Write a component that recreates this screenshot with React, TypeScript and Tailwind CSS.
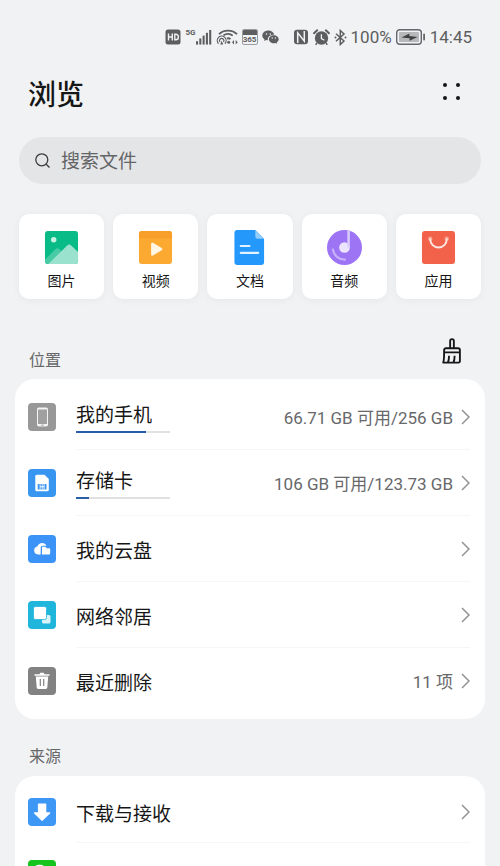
import type { ReactNode } from 'react'

type Row = {
    name: string
    icon: ReactNode
    detail?: string
    used?: number
}

/* ---------- status bar icons ---------- */

function StatusIcons() {
    return (
        <>
            <svg width="16" height="16" viewBox="0 0 16 16" aria-hidden="true">
                <rect x="0.500" y="0.500" width="15" height="15" rx="2.500" fill="currentColor" />
                <path d="M3.500 4.500v7M7.300 4.500v7M3.500 8h3.800M9.800 5.200v5.600h1a2.600 2.800 0 0 0 0-5.600z" fill="none" stroke="#f1f2f4" strokeWidth="1.400" />
            </svg>
            <div className="flex items-start">
                <span className="text-[8px] leading-[8px] font-bold">5G</span>
                <svg width="16" height="17" viewBox="0 0 17 17" fill="currentColor" aria-hidden="true">
                    <rect x="0" y="12.500" width="2.200" height="3.500" />
                    <rect x="3.500" y="9.500" width="2.200" height="6.500" />
                    <rect x="7" y="6.500" width="2.200" height="9.500" />
                    <rect x="10.500" y="3.500" width="2.200" height="12.500" />
                    <rect x="14" y="0.500" width="2.200" height="15.500" />
                </svg>
            </div>
            <svg width="22" height="16" viewBox="0 0 22 16" fill="none" stroke="currentColor" strokeWidth="1.800" aria-hidden="true">
                <path d="M3 5.200C7.500 0.300 16.500 0.300 21 5.200M7.500 6.400c2.600-2 6.600-2 9.200 0.300M11 9.600c1.300-0.600 2.500-0.300 3.500 0.500" />
                <path d="M2.500 14.600a4.400 4.400 0 1 1 6.400 0M3.900 12.900a2.200 2.200 0 1 1 3.600 0" strokeWidth="1.200" />
                <path d="M4.200 15.500L5.700 11.800L7.200 15.500z" fill="currentColor" stroke="none" />
                <circle cx="12.700" cy="13.200" r="1.500" fill="currentColor" stroke="none" />
                <path d="M16 13.200l2-2.200v4.400zM21.700 13.200l-2-2.200v4.400z" fill="currentColor" stroke="none" />
            </svg>
            <div className="flex h-4 w-4 flex-col overflow-hidden rounded-[2px] border border-[#9b9c9e]">
                <span className="h-[5px] shrink-0 bg-[#5d5e60]" />
                <span className="flex justify-center text-[8px] leading-[10px] font-bold">365</span>
            </div>
            <svg width="17" height="16" viewBox="0 0 17 16" fill="currentColor" aria-hidden="true">
                <path d="M6.400 1.500C2.900 1.500.3 3.700.3 6.500c0 1.600.8 2.900 2.200 3.800l-.5 1.700 2-1c.6.200 1.200.3 1.900.3C5.200 8 8 5.500 12.200 5.700 11.700 3.200 9.300 1.500 6.400 1.500z" />
                <path d="M16.700 10.200c0-2.200-2.200-4-4.900-4s-4.900 1.800-4.900 4 2.200 4 4.900 4c.6 0 1.200-.1 1.700-.3l1.700.9-.5-1.500c1.200-.7 2-1.800 2-3.100z" />
                <g fill="#f1f2f4">
                    <circle cx="4.500" cy="5" r="0.800" />
                    <circle cx="8.300" cy="5" r="0.800" />
                    <circle cx="10.200" cy="9" r="0.700" />
                    <circle cx="13.400" cy="9" r="0.700" />
                </g>
            </svg>
        </>
    )
}

function DeviceIcons() {
    return (
        <>
            <svg width="16" height="16" viewBox="0 0 16 16" aria-hidden="true">
                <rect x="1" y="0.700" width="14" height="14.600" rx="3" fill="currentColor" />
                <path d="M4.700 14V3.800l6.600 8.400V2" fill="none" stroke="#f1f2f4" strokeWidth="1.500" />
            </svg>
            <svg width="17" height="17" viewBox="0 0 17 17" fill="none" stroke="currentColor" aria-hidden="true">
                <circle cx="8.500" cy="9" r="6.700" fill="currentColor" stroke="none" />
                <path d="M1 4.200L4.200 1.300M16 4.200L12.800 1.300" strokeWidth="2" strokeLinecap="round" />
                <path d="M4 14l-1.300 1.700M13 14l1.300 1.700" strokeWidth="1.500" />
                <path d="M8.400 5.200v4.300l3 1.700" stroke="#f1f2f4" strokeWidth="1.300" />
            </svg>
            <svg width="13" height="17" viewBox="0 0 13 17" fill="none" stroke="currentColor" strokeWidth="1.500" aria-hidden="true">
                <path d="M2 4.700l8 7.300-3.700 3.500v-14L10 5l-8 7.300" />
                <circle cx="1.500" cy="8.500" r="1" fill="currentColor" stroke="none" />
                <circle cx="11.500" cy="8.500" r="1" fill="currentColor" stroke="none" />
            </svg>
        </>
    )
}

function BatteryIcon() {
    return (
        <svg width="30" height="16" viewBox="0 0 30 16" aria-hidden="true">
            <rect x="0.700" y="0.700" width="24.600" height="14.600" rx="3" fill="none" stroke="#66676a" strokeWidth="1.400" />
            <rect x="3" y="3" width="20" height="10" rx="1" fill="#b7b8ba" />
            <path d="M5.500 8.400l8-4-.3 2.500 8.300 1-8 3.900.2-2.600z" fill="#3f4042" />
            <rect x="27.200" y="4.500" width="1.800" height="7" rx="0.900" fill="#66676a" />
        </svg>
    )
}

/* ---------- category icons ---------- */

const categories = [
    {
        name: '图片',
        icon: (
            <>
                <rect x="1" y="1" width="34" height="34" rx="3" fill="#09bb86" />
                <circle cx="10" cy="10" r="2.800" fill="#c9f2e4" />
                <path d="M1 30.500l10.700-10.700a3 3 0 0 1 4.200 0L30 35H4a3 3 0 0 1-3-3z" fill="#46cba4" />
                <path d="M5 34.500l18.800-18.600a3 3 0 0 1 4.200 0l7 6.600V32a3 3 0 0 1-3 3H5z" fill="#9ae2cd" />
            </>
        ),
    },
    {
        name: '视频',
        icon: (
            <>
                <rect x="1" y="1" width="34" height="34" rx="3" fill="#fba931" />
                <path d="M1 8.500V4a3 3 0 0 1 3-3h28a3 3 0 0 1 3 3v4.500z" fill="#f79e2b" />
                <path d="M13.500 14.300c0-1 1-1.600 1.900-1.100l9 5.300c.9.500.9 1.700 0 2.200l-9 5.500c-.9.500-1.900-.1-1.900-1.100z" fill="#fff6e5" />
            </>
        ),
    },
    {
        name: '文档',
        icon: (
            <>
                <path d="M5.500 0H24l9 9v24a3 3 0 0 1-3 3H5.500a3 3 0 0 1-3-3V3a3 3 0 0 1 3-3z" fill="#2598fb" />
                <path d="M24 0l9 9h-7a2 2 0 0 1-2-2z" fill="#93cdfd" />
                <path d="M9 16.500h9M9 23.500h18" stroke="#e4f3ff" strokeWidth="2.200" strokeLinecap="round" />
            </>
        ),
    },
    {
        name: '音频',
        icon: (
            <>
                <circle cx="18" cy="18" r="18" fill="#9d75f4" />
                <circle cx="18" cy="18" r="5.500" fill="#ece4ff" />
                <path d="M22.200 0.500v17.500" stroke="#d9caff" strokeWidth="2.600" />
                <path d="M6 20a12.500 12.500 0 0 0 12.500 10.500" fill="none" stroke="#c8b1fc" strokeWidth="2.200" strokeLinecap="round" />
            </>
        ),
    },
    {
        name: '应用',
        icon: (
            <>
                <rect x="1" y="1" width="34" height="34" rx="3" fill="#f2624b" />
                <circle cx="9.500" cy="9" r="2.300" fill="#f9a08f" />
                <circle cx="26.500" cy="9" r="2.300" fill="#f9a08f" />
                <path d="M9.500 9.500a8.500 8.500 0 0 0 17 0" fill="none" stroke="#ffe8e3" strokeWidth="1.900" strokeLinecap="round" />
            </>
        ),
    },
]

/* ---------- list icons ---------- */

const places: Row[] = [
    {
        name: '我的手机',
        detail: '66.71 GB 可用/256 GB',
        used: 74,
        icon: (
            <>
                <rect width="28" height="28" rx="4" fill="#989898" />
                <rect x="9" y="4.500" width="11" height="19" rx="1.800" fill="#f4f4f4" />
                <rect x="10" y="6.500" width="9" height="14.500" fill="#a0a0a0" />
                <rect x="13.200" y="21.700" width="2.600" height="0.900" fill="#989898" />
            </>
        ),
    },
    {
        name: '存储卡',
        detail: '106 GB 可用/123.73 GB',
        used: 14,
        icon: (
            <>
                <rect width="28" height="28" rx="4" fill="#3896f1" />
                <path d="M8.800 5.700h7.700l4.300 4.300v10.800a1.500 1.500 0 0 1-1.500 1.500H8.800a1.500 1.500 0 0 1-1.500-1.500V7.200a1.500 1.500 0 0 1 1.500-1.500z" fill="#fff" />
                <path d="M9.700 15h2v5.500h-2zM12.400 15h1.400v2.300h-1.400zM12.400 18.200h1.400v2.300h-1.400zM14.500 15h1.200v2.300h-1.200zM14.500 18.200h1.200v2.300h-1.200zM16.500 15h2v5.500h-2z" fill="#3896f1" />
            </>
        ),
    },
    {
        name: '我的云盘',
        icon: (
            <>
                <rect width="28" height="28" rx="4" fill="#3b93f7" />
                <path d="M12.700 19.500H10a4 4 0 0 1-.7-7.900C10.200 9.300 12 8 14.200 8c2 0 3.400 1 4.200 2.700h-4.200a1.500 1.500 0 0 0-1.500 1.500z" fill="#fff" />
                <path d="M14 11.700h3.500l1.200 1.500h2.300a1.200 1.200 0 0 1 1.200 1.200v3.900a1.200 1.200 0 0 1-1.200 1.200h-7z" fill="#fff" />
            </>
        ),
    },
    {
        name: '网络邻居',
        icon: (
            <>
                <rect width="28" height="28" rx="4" fill="#20b5db" />
                <rect x="14" y="14" width="8.500" height="8.500" rx="1.500" fill="#d9f3fa" />
                <rect x="5.500" y="5.500" width="13" height="13" rx="1.700" fill="#fff" stroke="#20b5db" strokeWidth="0.800" />
            </>
        ),
    },
    {
        name: '最近删除',
        detail: '11 项',
        icon: (
            <>
                <rect width="28" height="28" rx="4" fill="#828282" />
                <path d="M6.500 7.200h5l.8-1.400h3.400l.8 1.400h5v1.600h-15z" fill="#fff" />
                <path d="M7.800 9.500h12.400l-.9 11a1.500 1.500 0 0 1-1.500 1.400h-7.600a1.500 1.500 0 0 1-1.500-1.400z" fill="#fff" />
                <path d="M12.300 12v7M15.700 12v7" stroke="#828282" strokeWidth="1.200" />
            </>
        ),
    },
]

const sources: Row[] = [
    {
        name: '下载与接收',
        icon: (
            <>
                <rect width="28" height="28" rx="4" fill="#3c97f5" />
                <path d="M10.700 5.500h6.800a.8.800 0 0 1 .8.800v8h3.200c.8 0 1.100.8.600 1.300l-7.300 7a1 1 0 0 1-1.400 0l-7.300-7c-.5-.5-.2-1.300.6-1.300h3.200v-8a.8.800 0 0 1 .8-.8z" fill="#fff" />
            </>
        ),
    },
    {
        name: '微信',
        icon: (
            <>
                <rect width="28" height="28" rx="4" fill="#15c41c" />
                <path d="M11.700 4.700c-4 0-7.200 2.600-7.200 6 0 1.900 1 3.500 2.600 4.600l-.6 2 2.400-1.200c.9.300 1.800.4 2.800.4 0-4 3-6.500 7.100-6.500-.7-3-3.700-5.300-7.100-5.300z" fill="#fff" />
            </>
        ),
    },
]

function ListRow({ row, last, compact }: { row: Row; last: boolean; compact?: boolean }) {
    const hasBar = row.used !== undefined

    return (
        <li className={compact ? 'h-[62px]' : 'h-[66px]'}>
            <button type="button" className="flex h-full w-full items-center gap-5 pl-[13px] text-left">
                <svg width="28" height="28" viewBox="0 0 28 28" className="shrink-0" aria-hidden="true">
                    {row.icon}
                </svg>
                <span className={`mr-[15px] flex h-full min-w-0 flex-1 items-center justify-between border-b pt-px ${last ? 'border-transparent' : 'border-[#f6f6f6]'}`}>
                    <span className={`flex flex-col ${hasBar ? 'pt-px' : 'pt-[5px]'}`}>
                        <span className="text-[19px] leading-7 text-[#161616]">{row.name}</span>
                        {hasBar && (
                            <span className="mt-px block h-[2px] w-[94px] bg-[#e1e1e2]">
                                <span className="block h-full bg-[#285da9]" style={{ width: `${row.used}%` }} />
                            </span>
                        )}
                    </span>
                    <span className="flex items-center gap-2 text-[#67686a]">
                        {row.detail && <span className="pt-[2px] text-[17px] leading-6">{row.detail}</span>}
                        <svg width="9" height="16" viewBox="0 0 9 16" fill="none" stroke="#929394" strokeWidth="1.500" aria-hidden="true">
                            <path d="M1 1l7 7-7 7" />
                        </svg>
                    </span>
                </span>
            </button>
        </li>
    )
}

export default function App() {
    return (
        <div className="h-screen overflow-hidden bg-[#f1f2f4] font-['Roboto','Noto_Sans_CJK_SC',sans-serif] text-[#161616]">
            {/* Status bar */}
            <div className="flex items-center justify-end pt-6 pr-7 text-[#5d5e60]">
                <div className="flex h-[26px] items-center gap-1">
                    <StatusIcons />
                </div>
                <div className="ml-[14px] flex h-[26px] items-center gap-1">
                    <DeviceIcons />
                    <span className="text-[17px] leading-6">100%</span>
                    <BatteryIcon />
                </div>
                <span className="ml-1 text-[17px] leading-6">14:45</span>
            </div>

            {/* Title */}
            <header className="mt-[26px] flex h-10 items-center justify-between pr-10 pl-7">
                <h1 className="text-[28px] leading-10 font-medium">浏览</h1>
                <button type="button" aria-label="更多" className="mb-[10px] grid grid-cols-2 gap-[9px]">
                    <span className="h-1 w-1 rounded-full bg-[#161616]" />
                    <span className="h-1 w-1 rounded-full bg-[#161616]" />
                    <span className="h-1 w-1 rounded-full bg-[#161616]" />
                    <span className="h-1 w-1 rounded-full bg-[#161616]" />
                </button>
            </header>

            {/* Search */}
            <label className="mx-[19px] mt-[21px] flex h-[47px] items-center gap-[11px] rounded-full bg-[#e4e5e7] px-4">
                <svg width="15" height="15" viewBox="0 0 15 15" fill="none" stroke="#3c3c3e" strokeWidth="1.300" className="shrink-0" aria-hidden="true">
                    <circle cx="6.800" cy="6.800" r="6" />
                    <path d="M11.200 11.200l3.300 3.300" />
                </svg>
                <input
                    type="text"
                    aria-label="搜索文件"
                    placeholder="搜索文件"
                    className="min-w-0 flex-1 bg-transparent pt-[3px] text-[19px] leading-7 outline-none placeholder:text-[#646567]"
                />
            </label>

            {/* Categories */}
            <nav className="mx-[19px] mt-[30px] grid grid-cols-5 gap-[9px]">
                {categories.map((c) => (
                    <button
                        key={c.name}
                        type="button"
                        className="flex h-[85px] flex-col items-center rounded-[10px] bg-white pt-4 shadow-[0_1px_8px_rgba(0,0,0,0.05)]"
                    >
                        <svg width="35" height="35" viewBox="0 0 36 36" aria-hidden="true">
                            {c.icon}
                        </svg>
                        <span className="mt-[6px] text-[14px] leading-5">{c.name}</span>
                    </button>
                ))}
            </nav>

            {/* Locations */}
            <section className="mt-9">
                <div className="flex h-8 items-center justify-between pr-[37px] pl-[29px]">
                    <h2 className="mt-5 text-[16px] leading-6 text-[#67686a]">位置</h2>
                    <button type="button" aria-label="清理">
                        <svg width="22" height="26" viewBox="0 0 22 28" fill="none" stroke="#161616" strokeWidth="2" strokeLinejoin="round" aria-hidden="true">
                            <path d="M9 11V3.200a2 2 0 0 1 4 0V11" />
                            <path d="M2.500 16.500V13a2 2 0 0 1 2-2h13a2 2 0 0 1 2 2v12a1.500 1.500 0 0 1-1.500 1.500H1.500c1-2 1-4.500 1-10z" />
                            <path d="M2.500 15.500h17M7.800 19c0 3-.2 5-1.200 7.500M13.800 19c0 3-.2 5-1.200 7.500" />
                        </svg>
                    </button>
                </div>
                <ul className="mx-[15px] mt-3 rounded-[20px] bg-white py-[5px]">
                    {places.map((row, i) => (
                        <ListRow key={row.name} row={row} last={i === places.length - 1} />
                    ))}
                </ul>
            </section>

            {/* Sources */}
            <section className="mt-[26px]">
                <h2 className="pl-[29px] text-[16px] leading-6 text-[#67686a]">来源</h2>
                <ul className="mx-[15px] mt-[7px] rounded-t-[20px] bg-white py-[5px]">
                    {sources.map((row, i) => (
                        <ListRow key={row.name} row={row} last={i === sources.length - 1} compact />
                    ))}
                </ul>
            </section>
        </div>
    )
}
